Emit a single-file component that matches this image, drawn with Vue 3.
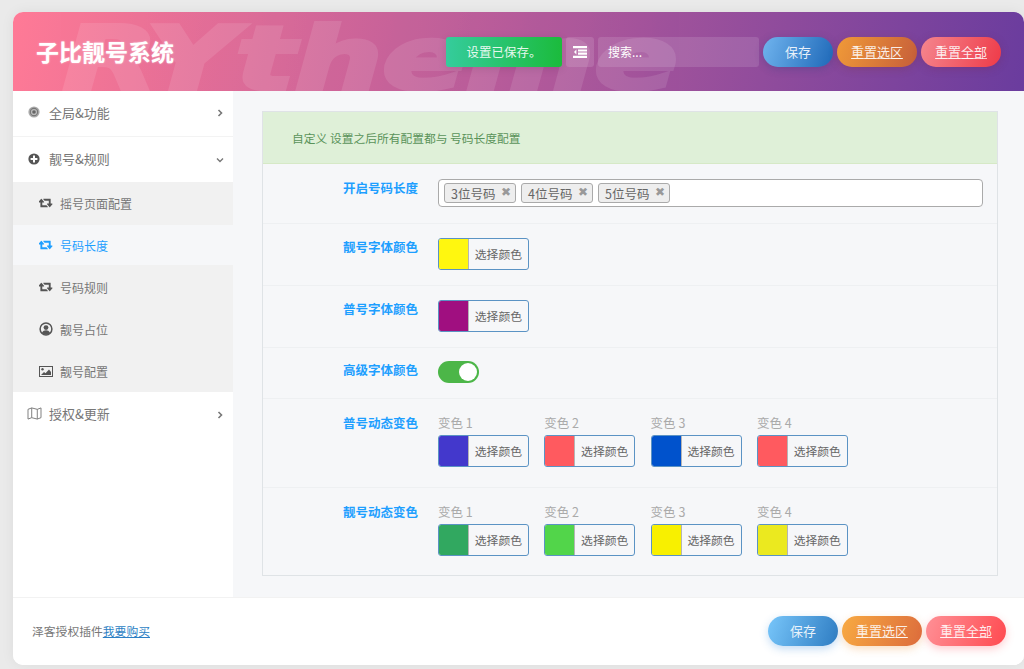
<script setup>
const topSwatch = [
  { label: '靓号字体颜色', color: '#fff70f' },
  { label: '普号字体颜色', color: '#a00f80' },
]
const groups = [
  { label: '普号动态变色', colors: ['#4338cc', '#ff5a5f', '#0052cc', '#ff5a5f'] },
  { label: '靓号动态变色', colors: ['#31a860', '#52d54a', '#f8f000', '#ebe91f'] },
]
const tags = ['3位号码', '4位号码', '5位号码']
const subs = [
  { text: '摇号页面配置', icon: 'retweet' },
  { text: '号码长度', icon: 'retweet', active: true },
  { text: '号码规则', icon: 'retweet' },
  { text: '靓号占位', icon: 'user' },
  { text: '靓号配置', icon: 'image' },
]
</script>

<template>
  <div class="page">
    <div class="card">
      <header class="head">
        <div class="mark">RYtheme</div>
        <h1 class="title">子比靓号系统</h1>
        <div class="head-right">
          <div class="toast">设置已保存。</div>
          <button class="icon-btn" aria-label="菜单">
            <svg width="14" height="12" viewBox="0 0 14 12"><path fill="#fff" d="M0 0h14v2.2H0zM5 3.4h9v2.2H5zM5 6.6h9v2.2H5zM0 9.8h14V12H0zM3.4 3.6v4.8L1 6z"/></svg>
          </button>
          <div class="search">搜索...</div>
          <a class="pill blue">保存</a>
          <a class="pill orange under">重置选区</a>
          <a class="pill red under">重置全部</a>
        </div>
      </header>

      <div class="body">
        <aside class="side">
          <div class="nav-item first">
            <svg class="ic" viewBox="0 0 12 12"><circle cx="6" cy="6" r="5.6" fill="#aaa"/><circle cx="6" cy="6" r="4.200" fill="#777"/><circle cx="6" cy="6" r="3.100" fill="#bbb"/><circle cx="6" cy="6" r="1.800" fill="#666"/></svg>
            <span class="nav-text">全局&amp;功能</span>
            <svg class="chev" viewBox="0 0 8 8"><path d="M2.5 1l3 3-3 3" fill="none" stroke="#777" stroke-width="1.6"/></svg>
          </div>
          <div class="nav-item">
            <svg class="ic" viewBox="0 0 12 12"><circle cx="6" cy="6" r="5.6" fill="#555"/><path d="M5 2.6h2V5h2.4v2H7v2.4H5V7H2.6V5H5z" fill="#fff"/></svg>
            <span class="nav-text">靓号&amp;规则</span>
            <svg class="chev" viewBox="0 0 8 8"><path d="M1 2.5l3 3 3-3" fill="none" stroke="#777" stroke-width="1.4"/></svg>
          </div>
          <div class="subs">
            <div v-for="s in subs" :key="s.text" class="sub" :class="{ active: s.active }">
              <svg v-if="s.icon === 'retweet'" class="sub-ic" viewBox="0 0 1920 1280"><path fill="currentColor" d="M1216 1120q0 13-9.500 22.500t-22.500 9.500h-960q-8 0-13.500-2t-9-7-5.500-8-3-11.500-1-11.500v-600h-192q-26 0-45-19t-19-45q0-24 15-41l320-384q19-22 49-22t49 22l320 384q15 17 15 41 0 26-19 45t-45 19h-192v384h576q16 0 25 11l160 192q7 11 7 21zm640-416q0 24-15 41l-320 384q-20 23-49 23t-49-23l-320-384q-15-17-15-41 0-26 19-45t45-19h192v-384h-576q-16 0-25-12l-160-192q-7-9-7-20 0-13 9.500-22.500t22.500-9.500h960q8 0 13.500 2t9 7 5.500 8.500 3 11.500 1 11v600h192q26 0 45 19t19 45z"/></svg>
              <svg v-else-if="s.icon === 'user'" class="sub-ic tall" viewBox="0 0 14 14"><circle cx="7" cy="7" r="5.900" fill="none" stroke="currentColor" stroke-width="1.500"/><circle cx="7" cy="5.600" r="2.400" fill="currentColor"/><path d="M2.800 11c1-2 2.500-2.700 4.200-2.700s3.200.7 4.200 2.700a6 6 0 0 1-8.400 0z" fill="currentColor"/></svg>
              <svg v-else class="sub-ic" viewBox="0 0 14 11"><rect x=".5" y=".5" width="13" height="10" fill="none" stroke="currentColor"/><circle cx="3.500" cy="3.300" r="1.200" fill="currentColor"/><path d="M2 9l3-3 1.500 1.300L10 3.500 12 6v3z" fill="currentColor"/></svg>
              <span>{{ s.text }}</span>
            </div>
          </div>
          <div class="nav-item last">
            <svg class="ic map" viewBox="0 0 16 14"><path d="M1 2.500l4-1.500 6 1.500 4-1.500v10.500l-4 1.500-6-1.500-4 1.500zM5 1v10.500M11 2.500V13" fill="none" stroke="#777" stroke-width="1"/></svg>
            <span class="nav-text">授权&amp;更新</span>
            <svg class="chev" viewBox="0 0 8 8"><path d="M2.500 1l3 3-3 3" fill="none" stroke="#777" stroke-width="1.600"/></svg>
          </div>
        </aside>

        <main class="main">
          <section class="panel">
            <div class="alert">自定义 设置之后所有配置都与 号码长度配置</div>

            <div class="row row-tags">
              <label class="lab">开启号码长度</label>
              <div class="tag-box">
                <span v-for="t in tags" :key="t" class="tag">{{ t }}<b class="x">✖</b></span>
              </div>
            </div>

            <div v-for="r in topSwatch" :key="r.label" class="row row-color">
              <label class="lab">{{ r.label }}</label>
              <div class="swatch">
                <i class="chip" :style="{ background: r.color }"></i>
                <span class="pick">选择颜色</span>
              </div>
            </div>

            <div class="row row-switch">
              <label class="lab">高级字体颜色</label>
              <div class="switch"><i class="knob"></i></div>
            </div>

            <div v-for="g in groups" :key="g.label" class="row row-group">
              <label class="lab">{{ g.label }}</label>
              <div class="cols">
                <div v-for="(c, i) in g.colors" :key="i" class="col">
                  <div class="col-label">变色 {{ i + 1 }}</div>
                  <div class="swatch">
                    <i class="chip" :style="{ background: c }"></i>
                    <span class="pick">选择颜色</span>
                  </div>
                </div>
              </div>
            </div>
          </section>
        </main>
      </div>

      <footer class="foot">
        <div class="foot-text">泽客授权插件<a class="buy">我要购买</a></div>
        <div class="foot-btns">
          <a class="pill blue-l">保存</a>
          <a class="pill orange-l under">重置选区</a>
          <a class="pill red-l under">重置全部</a>
        </div>
      </footer>
    </div>
  </div>
</template>

<style>
html, body { margin: 0; background: #eaeaea; }
</style>

<style scoped>
.page {
  height: 669px;
  padding: 12px 0 4px 13px;
  box-sizing: border-box;
  overflow: hidden;
  font-family: "Noto Sans CJK SC", "Noto Sans", sans-serif;
  background: #eaeaea;
}
.card {
  height: 653px;
  display: flex;
  flex-direction: column;
  background: #fff;
  border-radius: 10px;
  overflow: hidden;
  box-shadow: 0 0 14px rgba(0, 0, 0, .06);
}
.head {
  position: relative;
  height: 79px;
  flex: none;
  display: flex;
  align-items: center;
  justify-content: space-between;
  padding: 0 23px 0 24px;
  overflow: hidden;
  background: linear-gradient(100deg, #ff7a96 0%, #6a3c9e 100%);
}
.mark {
  position: absolute;
  left: 50px;
  top: -19px;
  font: italic 700 88px/1.500 "DejaVu Sans", sans-serif;
  color: #fff;
  -webkit-text-stroke: 4px #fff;
  opacity: .1;
  transform: scaleX(1.400);
  transform-origin: left center;
  white-space: nowrap;
}
.title {
  position: relative;
  margin: 0 0 0 -1px;
  font-size: 23px;
  font-weight: 700;
  color: #fff;
  line-height: 1;
  text-shadow: 0 0 2px rgba(255, 255, 255, .5);
}
.head-right {
  position: relative;
  display: flex;
  align-items: center;
  gap: 4px;
  height: 30px;
}
.toast {
  width: 116px;
  height: 30px;
  border-radius: 3px;
  background: linear-gradient(90deg, #35cc9c, #1bbb3c);
  box-shadow: 0 2px 8px rgba(0, 0, 0, .1);
  color: rgba(255, 255, 255, .9);
  font-size: 12.500px;
  line-height: 30px;
  text-align: center;
}
.icon-btn {
  width: 28px;
  height: 30px;
  padding: 0;
  border: 0;
  border-radius: 3px;
  background: rgba(255, 255, 255, .13);
  display: flex;
  align-items: center;
  justify-content: center;
}
.search {
  width: 161px;
  height: 30px;
  box-sizing: border-box;
  padding-left: 10px;
  border-radius: 3px;
  background: rgba(255, 255, 255, .12);
  color: #fff;
  font-size: 12px;
  line-height: 30px;
}
.pill {
  display: block;
  width: 70px;
  height: 30px;
  border-radius: 15px;
  color: rgba(255, 255, 255, .88);
  font-size: 13px;
  line-height: 30px;
  text-align: center;
  flex: none;
}
.pill.under {
  width: 80px;
  text-decoration: underline;
  text-decoration-thickness: 1px;
  text-decoration-color: rgba(255, 255, 255, .7);
  text-underline-offset: 1px;
}
.blue { background: linear-gradient(110deg, #70b4ee, #1e68b8); box-shadow: 0 2px 8px rgba(40, 60, 120, .3); }
.orange { background: linear-gradient(110deg, #f09a38, #c65e3a); box-shadow: 0 2px 8px rgba(120, 50, 60, .3); }
.red { background: linear-gradient(110deg, #f5868e, #ee3a48); box-shadow: 0 2px 8px rgba(120, 40, 80, .3); }
.blue-l { background: linear-gradient(110deg, #78c6fa, #2e7cc2); box-shadow: 0 3px 9px rgba(60, 140, 220, .3); }
.orange-l { background: linear-gradient(110deg, #f8aa42, #dc6c3c); box-shadow: 0 3px 9px rgba(240, 150, 60, .3); }
.red-l { background: linear-gradient(110deg, #ff9096, #ff4a50); box-shadow: 0 3px 9px rgba(255, 90, 100, .3); }

.body {
  flex: 1;
  min-height: 0;
  display: flex;
}
.side {
  width: 220px;
  flex: none;
  background: #fff;
}
.nav-item {
  height: 45px;
  display: flex;
  align-items: center;
  padding: 0 9px 2px 15px;
  box-sizing: border-box;
  color: #777;
}
.nav-item.first { border-bottom: 1px solid #f3f3f3; height: 46px; padding-bottom: 3px; }
.nav-text { flex: 1; font-size: 13px; margin-left: 9px; }
.ic { width: 12px; height: 12px; flex: none; }
.ic.map { width: 15px; height: 13px; margin-left: -1px; margin-right: -2px; }
.chev { width: 8px; height: 8px; flex: none; margin-top: 2px; }
.subs { background: #f1f1f1; }
.sub {
  height: 42px;
  box-sizing: border-box;
  display: flex;
  align-items: center;
  padding-left: 26px;
  font-size: 12px;
  color: #777;
}
.sub.active {
  background: #f6f7f9;
  color: #1e9fff;
  border-top: 1px solid #f1f1f1;
  border-bottom: 1px solid #f1f1f1;
}
.sub-ic { width: 14px; height: 11px; margin-right: 7px; flex: none; color: #555; }
.sub-ic.tall { height: 14px; }
.sub.active .sub-ic { color: #1e9fff; }

.main {
  flex: 1;
  min-width: 0;
  background: #f6f7f9;
  padding: 20px 26px 21px 29px;
  box-sizing: border-box;
}
.panel {
  height: 100%;
  box-sizing: border-box;
  border: 1px solid #dfe3e6;
  background: #f6f7f9;
}
.alert {
  height: 52px;
  box-sizing: border-box;
  padding-left: 29px;
  background: #dff0d8;
  border-bottom: 1px solid #d6e9c6;
  color: #5a935a;
  font-size: 11.750px;
  line-height: 51px;
}
.row {
  display: flex;
  align-items: flex-start;
  border-bottom: 1px solid #eef0f2;
  box-sizing: border-box;
}
.row:last-child { border-bottom: 0; }
.lab {
  width: 155px;
  flex: none;
  margin-right: 20px;
  text-align: right;
  color: #1e9fff;
  font-size: 12.500px;
  font-weight: 700;
  line-height: 18px;
}
.row-tags { height: 60px; padding-top: 15px; }
.tag-box {
  width: 545px;
  height: 28px;
  box-sizing: border-box;
  border: 1px solid #aaa;
  border-radius: 4px;
  background: #fff;
  padding: 3px 5px;
  display: flex;
  gap: 5px;
}
.tag {
  width: 72px;
  height: 20px;
  box-sizing: border-box;
  border: 1px solid #aaa;
  border-radius: 3px;
  background: #eee;
  color: #666;
  font-size: 12.500px;
  line-height: 19px;
  padding-left: 6px;
  display: flex;
  justify-content: space-between;
  padding-right: 4px;
}
.x { color: #999; font-size: 12px; font-weight: 700; line-height: 17px; font-family: "DejaVu Sans", sans-serif; }
.row-color { height: 62px; padding-top: 14px; }
.swatch {
  width: 91px;
  height: 32px;
  box-sizing: border-box;
  border: 1px solid #5b93c4;
  border-radius: 3px;
  background: #f6f7f9;
  display: flex;
  overflow: hidden;
}
.chip { width: 30px; flex: none; border-right: 1px solid #b5b5b5; box-sizing: border-box; }
.pick {
  flex: 1;
  text-align: right;
  padding-right: 6px;
  color: #666;
  font-size: 11.800px;
  line-height: 29px;
}
.row-switch { height: 51px; padding-top: 13px; }
.switch {
  width: 41px;
  height: 22px;
  border-radius: 11px;
  background: #4cb648;
  position: relative;
}
.knob {
  position: absolute;
  right: 2px;
  top: 2px;
  width: 18px;
  height: 18px;
  border-radius: 50%;
  background: #fff;
}
.row-group { height: 89px; padding-top: 15px; }
.cols { display: flex; gap: 15.300px; }
.col-label { color: #aaa; font-size: 12.500px; line-height: 17px; margin-bottom: 4px; }

.foot {
  height: 68px;
  flex: none;
  box-sizing: border-box;
  border-top: 1px solid #f2f2f2;
  display: flex;
  align-items: center;
  justify-content: space-between;
  padding: 0 18px 2px 19px;
  background: #fff;
}
.foot-text { color: #777; font-size: 11.800px; }
.buy { color: #2d7fc4; text-decoration: underline; }
.foot-btns { display: flex; gap: 4px; }
</style>
